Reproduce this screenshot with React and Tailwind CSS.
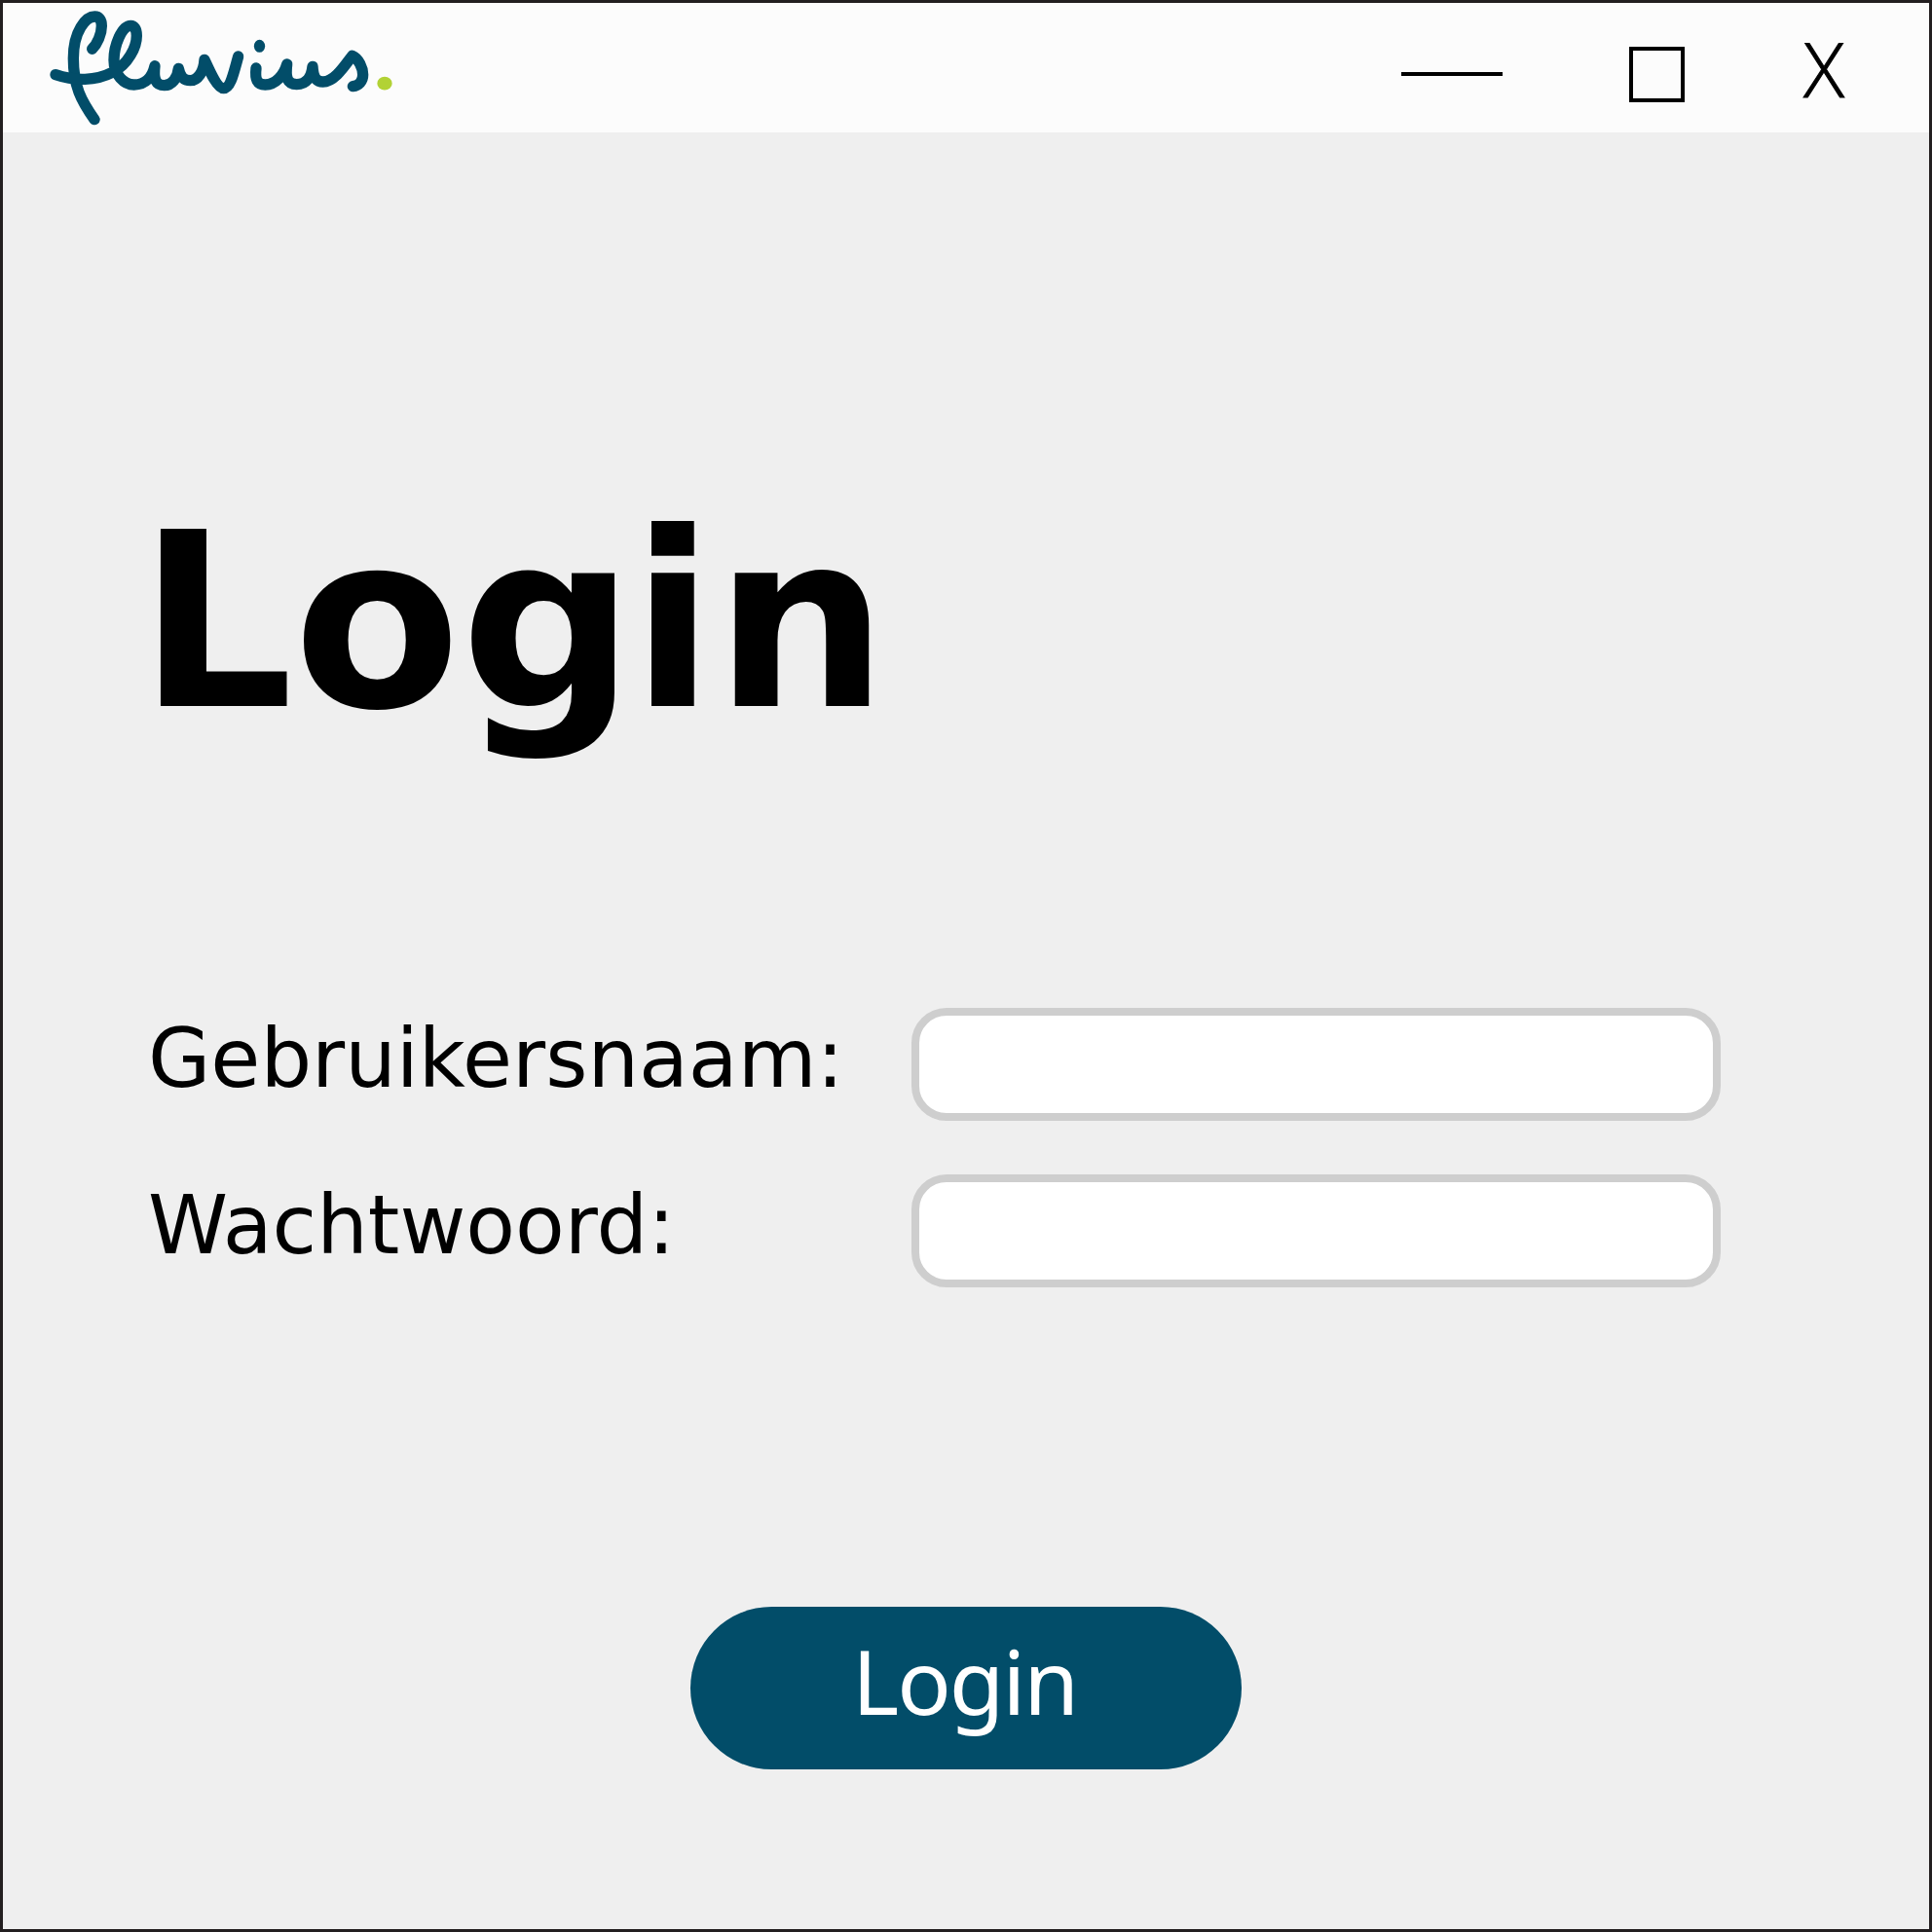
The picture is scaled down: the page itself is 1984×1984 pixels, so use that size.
function Logo() {
  return (
    <svg className="h-[136px] w-[380px] shrink-0" viewBox="0 0 1140 408" fill="none" aria-label="fluvius">
      <g stroke="#024d69" strokeWidth="34" strokeLinecap="round" strokeLinejoin="round">
        <path d="M164 151C180 135 193 105 193 80C193 60 184 51 172 51C145 51 106 95 106 180C106 265 130 310 171 368" />
        <path d="M51 230C110 250 175 250 228 222C275 198 301 145 301 110C301 88 292 79 283 79C255 79 231 140 231 185C231 230 262 261 293 261C330 261 350 235 357 203C352 245 360 263 386 263C410 263 427 240 430 211C435 235 445 248 466 248C490 248 508 220 510 184C520 205 548 272 569 272C590 272 600 225 614 174" />
        <path d="M669 210C665 245 672 261 697 261C730 261 755 230 764 198C759 240 765 260 794 260C825 260 840 235 843 205C845 240 855 252 875 252C910 252 940 205 965 172C985 180 998 210 998 230C998 250 985 264 967 266" />
      </g>
      <ellipse cx="679.5" cy="142" rx="17" ry="19.5" fill="#024d69" />
      <ellipse cx="1065" cy="257" rx="23" ry="20.5" fill="#b2d235" />
    </svg>
  );
}

function Field({ label, type, className }) {
  return (
    <label className={"flex h-[116px] items-center " + className}>
      <span className="mb-[10px] w-[784px] shrink-0 whitespace-nowrap text-[83px] leading-[100px]">{label}</span>
      <input type={type} className="h-[116px] w-[831px] rounded-[36px] border-8 border-[#cecece] bg-white px-8 text-[60px] outline-none" />
    </label>
  );
}

export default function App() {
  return (
    <div className="flex h-[1984px] w-[1984px] flex-col border-[3px] border-[#231f20] bg-[#efefef] font-['DejaVu_Sans',sans-serif] text-black">
      <header className="flex h-[133px] shrink-0 items-start justify-between bg-[#fcfcfc] pl-[37px] pr-[87px]">
        <div className="-mt-[3px]"><Logo /></div>
        <div className="flex items-start">
          <button aria-label="Minimize" className="mt-[71px] h-[4px] w-[104px] bg-black" />
          <button aria-label="Maximize" className="ml-[130px] mt-[44.5px] size-[57px] border-4 border-black" />
          <button className="ml-[122px] mt-[17px] flex w-[42px] justify-center font-['Open_Sans',sans-serif] text-[78px] font-light leading-[100px] [-webkit-text-stroke:1px_black]">
            <span>X</span>
          </button>
        </div>
      </header>
      <main className="flex flex-col pl-[149px]">
        <h1 className="mt-[353px] -ml-[10px] text-[250px] font-bold leading-[300px]">
          Lo<span className="tracking-[-4px]">g</span>in
        </h1>
        <Field label="Gebruikersnaam:" type="text" className="mt-[246px]" />
        <Field label="Wachtwoord:" type="password" className="mt-[55px]" />
        <button className="ml-[557px] mt-[328px] flex h-[167px] w-[566px] items-center justify-center rounded-full bg-[#024d69] pb-[15px] font-['Noto_Sans',sans-serif] text-[92px] leading-none tracking-[-2px] text-white">
          <span className="-ml-[3px]">Login</span>
        </button>
      </main>
    </div>
  );
}
